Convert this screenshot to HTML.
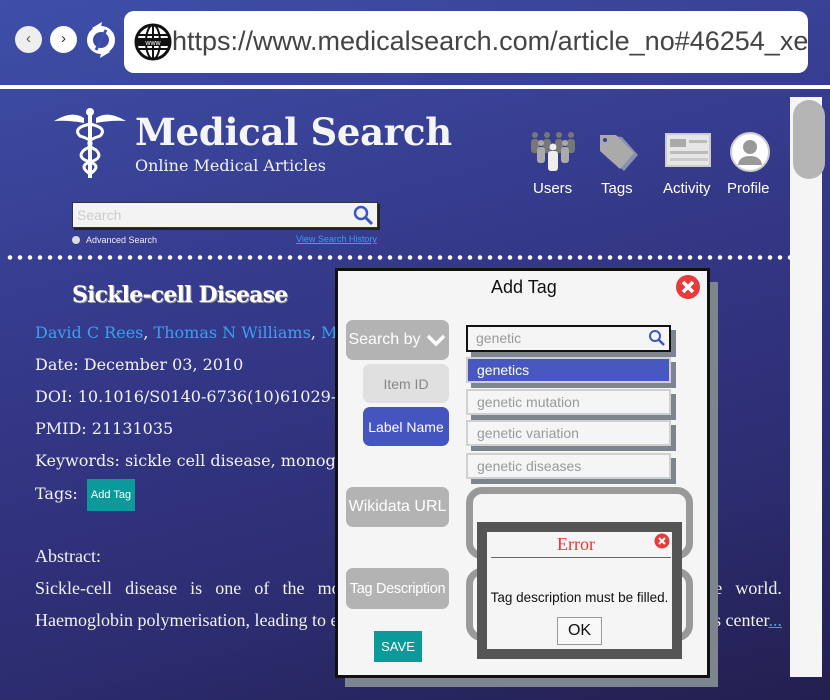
<!DOCTYPE html>
<html><head><meta charset="utf-8"><style>
*{margin:0;padding:0;box-sizing:border-box}
body{width:830px;height:700px;overflow:hidden;position:relative;background:linear-gradient(165deg,#3e4fa8 0%,#35398a 40%,#2c2c70 75%,#231f4f 100%);font-family:"Liberation Sans",sans-serif}
.a{position:absolute}
.serif{font-family:"Liberation Serif",serif}
.txt{color:#f2f2f2;font-family:"DejaVu Serif","Liberation Serif",serif;font-size:16px;left:35px}
a{color:#3aa0f0}
.btn{position:absolute;border-radius:7px;color:#fff;font-size:15px;display:flex;align-items:center;justify-content:center;white-space:nowrap}
.opt{position:absolute;left:466px;width:205px;height:26px;background:#f5f5f5;border:2px solid #d0d0d0;color:#999;font-size:14px;padding-left:9px;line-height:22px;box-shadow:5px 5px 0 #7d868e}
.ta{position:absolute;left:466px;width:227px;border:7px solid #999;border-radius:16px;background:#f5f5f5}
</style></head><body>
<div class="a" style="left:15px;top:26px;width:27px;height:27px;border-radius:50%;background:#eee;color:#555;font-size:15px;text-align:center;line-height:26px">‹</div>
<div class="a" style="left:50px;top:26px;width:27px;height:27px;border-radius:50%;background:#fff;color:#333;font-size:15px;text-align:center;line-height:26px">›</div>
<svg class="a" style="left:86px;top:20px" width="30" height="40" viewBox="0 0 30 40"><circle cx="15" cy="20" r="11" fill="none" stroke="#fff" stroke-width="6"/><path d="M6 8 L16 2 L14 12Z M24 32 L14 38 L16 28Z" fill="#fff"/><line x1="10" y1="30" x2="20" y2="10" stroke="#4050b0" stroke-width="3"/></svg>
<div class="a" style="left:124px;top:11px;width:684px;height:62px;background:#fff;border-radius:10px"></div>
<svg class="a" style="left:134px;top:23px" width="38" height="38" viewBox="0 0 38 38"><circle cx="19" cy="19" r="17" fill="#fff" stroke="#111" stroke-width="3"/><ellipse cx="19" cy="19" rx="7" ry="17" fill="none" stroke="#111" stroke-width="2"/><line x1="19" y1="2" x2="19" y2="36" stroke="#111" stroke-width="2"/><line x1="3" y1="12" x2="35" y2="12" stroke="#111" stroke-width="2"/><line x1="3" y1="26" x2="35" y2="26" stroke="#111" stroke-width="2"/><rect x="3" y="15" width="32" height="8" fill="#111"/><text x="19" y="22" font-size="7" fill="#fff" text-anchor="middle" font-family="Liberation Sans">www</text></svg>
<div class="a" style="left:172px;top:26px;font-size:27px;color:#444;letter-spacing:0px;white-space:nowrap">https://www.medicalsearch.com/article_no#46254_xe</div>
<div class="a" style="left:0;top:85px;width:830px;height:4px;background:#fff"></div>
<svg class="a" style="left:54px;top:106px" width="72" height="74" viewBox="0 0 72 74"><path d="M0 15 Q18 4 30 12 L30 17 Q15 14 0 15Z M72 15 Q54 4 42 12 L42 17 Q57 14 72 15Z" fill="#fff"/><circle cx="36" cy="6" r="4" fill="#fff"/><rect x="34" y="8" width="4" height="64" fill="#fff"/><path d="M36 18 Q18 22 26 30 Q46 36 30 44 Q22 52 36 56 Q48 60 36 68 M36 18 Q54 22 46 30 Q26 36 42 44 Q50 52 36 56 Q24 60 36 68" stroke="#fff" stroke-width="3" fill="none"/></svg>
<div class="a" style="left:135px;top:110px;font-weight:bold;color:#f5f5f5;font-family:'DejaVu Serif','Liberation Serif',serif;font-size:37px;letter-spacing:-0.3px">Medical Search</div>
<div class="a" style="left:135px;top:156px;font-size:16px;color:#f2f2f2;font-family:'DejaVu Serif',serif">Online Medical Articles</div>
<svg class="a" style="left:529px;top:131px" width="48" height="40" viewBox="0 0 48 40"><g fill="#777"><circle cx="6" cy="4" r="3"/><circle cx="18" cy="4" r="3"/><circle cx="30" cy="4" r="3"/><circle cx="42" cy="4" r="3"/><rect x="2" y="8" width="8" height="14" rx="3"/><rect x="14" y="8" width="8" height="14" rx="3"/><rect x="26" y="8" width="8" height="14" rx="3"/><rect x="38" y="8" width="8" height="14" rx="3"/></g><g fill="#aaa"><circle cx="12" cy="12" r="3"/><circle cx="36" cy="12" r="3"/><rect x="8" y="16" width="8" height="16" rx="3"/><rect x="32" y="16" width="8" height="16" rx="3"/></g><circle cx="24" cy="16" r="3.5" fill="#eee"/><rect x="19" y="20" width="10" height="20" rx="3" fill="#eee"/></svg>
<svg class="a" style="left:598px;top:133px" width="42" height="40" viewBox="0 0 42 40"><path d="M8 2 L24 4 L40 22 L26 38 L8 22Z" fill="#8890b0"/><path d="M2 2 L18 2 L36 20 L22 36 L2 18Z" fill="#aaa"/><circle cx="7" cy="7" r="2" fill="#3a3f90"/></svg>
<div class="a" style="left:665px;top:133px;width:46px;height:34px;background:#e6e6e6;border:2px solid #ccc"><div class="a" style="left:3px;top:4px;width:16px;height:8px;background:#aaa"></div><div class="a" style="left:22px;top:5px;width:18px;height:3px;background:#bbb"></div><div class="a" style="left:3px;top:16px;width:38px;height:3px;background:#bbb"></div><div class="a" style="left:3px;top:23px;width:38px;height:3px;background:#ccc"></div></div>
<svg class="a" style="left:729px;top:131px" width="42" height="42" viewBox="0 0 42 42"><circle cx="21" cy="21" r="19" fill="#fff" stroke="#ccc" stroke-width="2"/><circle cx="21" cy="16" r="7" fill="#999"/><path d="M9 34 Q10 25 21 25 Q32 25 33 34Z" fill="#999"/></svg>
<div class="a" style="left:533px;top:180px;font-size:15px;color:#fff">Users</div>
<div class="a" style="left:601px;top:180px;font-size:15px;color:#fff">Tags</div>
<div class="a" style="left:663px;top:180px;font-size:15px;color:#fff">Activity</div>
<div class="a" style="left:727px;top:180px;font-size:15px;color:#fff">Profile</div>
<div class="a" style="left:72px;top:202px;width:306px;height:26px;background:#f3f3f3;border:1px solid #333;box-shadow:2px 2px 0 #222"></div>
<div class="a" style="left:77px;top:207px;font-size:14px;color:#ccc">Search</div>
<svg class="a" style="left:352px;top:204px" width="22" height="22" viewBox="0 0 22 22"><circle cx="9" cy="9" r="6" fill="none" stroke="#3a56c0" stroke-width="2.5"/><line x1="13" y1="13" x2="20" y2="20" stroke="#3a56c0" stroke-width="3"/></svg>
<div class="a" style="left:72px;top:236px;width:8px;height:8px;border-radius:50%;background:#ddd"></div>
<div class="a" style="left:86px;top:235px;font-size:9px;color:#eee">Advanced Search</div>
<div class="a" style="left:296px;top:234px;font-size:9px;color:#3aa0f0;text-decoration:underline">View Search History</div>
<div class="a" style="left:5px;top:255px;width:785px;height:5px;background:radial-gradient(circle,#fff 2px,transparent 2.5px) 0 0/10px 5px"></div>
<div class="a" style="left:790px;top:97px;width:32px;height:580px;background:#f5f5f5"></div>
<div class="a" style="left:793px;top:100px;width:32px;height:79px;background:#b5b5b5;border-radius:16px"></div>
<div class="a" style="left:72px;top:282px;font-size:22px;font-weight:bold;color:#fff;font-family:'DejaVu Serif',serif;text-shadow:1px 1px 0 #999;letter-spacing:-0.8px">Sickle-cell Disease</div>
<div class="a txt" style="top:323px"><a>David C Rees</a>, <a>Thomas N Williams</a>, <a>M</a></div>
<div class="a txt" style="top:355px">Date: December 03, 2010</div>
<div class="a txt" style="top:387px">DOI: 10.1016/S0140-6736(10)61029-X</div>
<div class="a txt" style="top:419px">PMID: 21131035</div>
<div class="a txt" style="top:451px">Keywords: sickle cell disease, monogenic</div>
<div class="a txt" style="top:484px">Tags:</div>
<div class="a" style="left:87px;top:479px;width:48px;height:32px;background:#0b9a9a;color:#fff;font-size:11px;text-align:center;line-height:32px">Add Tag</div>
<div class="a" style="left:35px;top:546px;color:#f2f2f2;font-family:'Liberation Serif',serif;font-size:18px">Abstract:</div>
<div class="a" style="left:35px;top:578px;width:747px;color:#f2f2f2;font-family:'Liberation Serif',serif;font-size:18px;text-align:justify;text-align-last:justify;white-space:nowrap;display:flex;justify-content:space-between"><span>Sickle-cell</span><span>disease</span><span>is</span><span>one</span><span>of</span><span>the</span><span>most</span><span>common</span><span>severe</span><span>monogenic</span><span>disorders</span><span>in</span><span>the</span><span>world.</span></div>
<div class="a" style="left:35px;top:610px;width:747px;color:#f2f2f2;font-family:'Liberation Serif',serif;font-size:18px;white-space:nowrap;display:flex;justify-content:space-between"><span>Haemoglobin polymerisation, leading to erythrocyte rigidity and</span><span>vaso-occlusion, is center<a style="text-decoration:underline">...</a></span></div>
<div class="a" style="left:345px;top:282px;width:373px;height:405px;background:#7d868e"></div>
<div class="a" style="left:335px;top:268px;width:375px;height:410px;background:#f5f5f5;border:3px solid #111"></div>
<div class="a" style="left:491px;top:277px;font-size:18px;color:#111">Add Tag</div>
<svg class="a" style="left:675px;top:274px" width="26" height="26" viewBox="0 0 26 26"><circle cx="13" cy="13" r="12" fill="#e83a3a"/><path d="M8 8 L18 18 M18 8 L8 18" stroke="#fff" stroke-width="3.5"/></svg>
<div class="btn" style="left:346px;top:320px;width:103px;height:40px;background:#b3b3b3;font-size:16px">Search by <svg width="22" height="14" viewBox="0 0 22 14" style="margin-left:4px"><path d="M3 3 L11 11 L19 3" stroke="#fff" stroke-width="3.5" fill="none"/></svg></div>
<div class="btn" style="left:363px;top:364px;width:86px;height:39px;background:#e0e0e0;color:#888;font-size:14px">Item ID</div>
<div class="btn" style="left:363px;top:407px;width:86px;height:39px;background:#4555c0;font-size:14px">Label Name</div>
<div class="btn" style="left:346px;top:487px;width:103px;height:40px;background:#b3b3b3;font-size:16px">Wikidata URL</div>
<div class="btn" style="left:346px;top:568px;width:103px;height:41px;background:#b3b3b3;font-size:14.5px;letter-spacing:-0.3px">Tag Description</div>
<div class="a" style="left:374px;top:631px;width:48px;height:31px;background:#0b9a9a;color:#fff;font-size:13px;text-align:center;line-height:31px">SAVE</div>
<div class="a" style="left:466px;top:325px;width:205px;height:27px;background:#f5f5f5;border:2px solid #111;box-shadow:5px 5px 0 #7d868e;color:#999;font-size:14px;padding-left:8px;line-height:23px">genetic</div>
<svg class="a" style="left:648px;top:329px" width="18" height="18" viewBox="0 0 18 18"><circle cx="7" cy="7" r="5" fill="none" stroke="#3a56c0" stroke-width="2"/><line x1="10.5" y1="10.5" x2="16" y2="16" stroke="#3a56c0" stroke-width="2.5"/></svg>
<div class="opt" style="top:357px;background:#4858c0;color:#fff;border-color:#d0d0d0">genetics</div>
<div class="opt" style="top:389px">genetic mutation</div>
<div class="opt" style="top:420px">genetic variation</div>
<div class="opt" style="top:453px">genetic diseases</div>
<div class="ta" style="top:487px;height:72px"></div>
<div class="ta" style="top:568px;height:73px"></div>
<div class="a" style="left:477px;top:522px;width:205px;height:137px;background:#555"></div>
<div class="a" style="left:487px;top:532px;width:185px;height:117px;background:#f5f5f5"></div>
<div class="a" style="left:557px;top:534px;font-family:'Liberation Serif',serif;font-size:18px;color:#e33">Error</div>
<svg class="a" style="left:654px;top:533px" width="16" height="16" viewBox="0 0 16 16"><circle cx="8" cy="8" r="7.5" fill="#e83a3a"/><path d="M5 5 L11 11 M11 5 L5 11" stroke="#fff" stroke-width="2"/></svg>
<div class="a" style="left:491px;top:557px;width:180px;height:1px;background:#666"></div>
<div class="a" style="left:487px;top:590px;width:185px;text-align:center;font-size:13.5px;color:#111;white-space:nowrap">Tag description must be filled.</div>
<div class="a" style="left:557px;top:617px;width:45px;height:28px;border:1px solid #999;background:#f8f8f8;text-align:center;line-height:26px;font-size:16px;color:#111">OK</div>
</body></html>
